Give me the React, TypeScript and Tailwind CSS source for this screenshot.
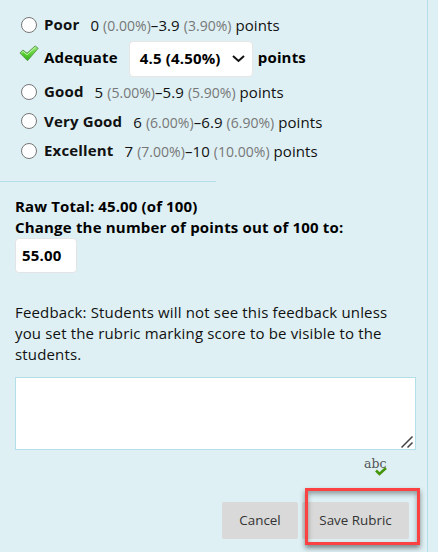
type Level = {
  name: string;
  from: string;
  fromPct: string;
  to: string;
  toPct: string;
  height: string;
};

function Option({ level }: { level: Level }) {
  return (
    <label className={`flex items-center whitespace-nowrap pl-[21px] ${level.height}`}>
      <span className="mr-[7px] size-[16px] shrink-0 rounded-full border border-[#767676] bg-white" />
      <span className="mr-[11px] font-bold tracking-[0.16px]">{level.name}</span>
      <span className="relative top-px tracking-[0.08px]">
        {level.from} <span className="text-sm tracking-[0.03px] text-[#777]">{level.fromPct}</span>–{level.to}{" "}
        <span className="text-sm tracking-[0.03px] text-[#777]">{level.toPct}</span> points
      </span>
    </label>
  );
}

const poor: Level = { name: "Poor", from: "0", fromPct: "(0.00%)", to: "3.9", toPct: "(3.90%)", height: "h-[29px]" };
const others: Level[] = [
  { name: "Good", from: "5", fromPct: "(5.00%)", to: "5.9", toPct: "(5.90%)", height: "h-[29px]" },
  { name: "Very Good", from: "6", fromPct: "(6.00%)", to: "6.9", toPct: "(6.90%)", height: "h-[30px]" },
  { name: "Excellent", from: "7", fromPct: "(7.00%)", to: "10", toPct: "(10.00%)", height: "h-[29px]" },
];

function GreenTick() {
  return (
    <svg width="20" height="17" viewBox="0 0 20 17" className="relative -left-px -top-[4px] mr-[4px] shrink-0">
      <defs>
        <linearGradient id="tick" x1="0" y1="0" x2="0" y2="1">
          <stop offset="0" stopColor="#a5ea84" />
          <stop offset="0.5" stopColor="#5fd335" />
          <stop offset="1" stopColor="#2fae18" />
        </linearGradient>
      </defs>
      <path d="M.9 8 3.9 5 8 8.2 16.2.9 19.2 3.3 8.5 15.7Z" fill="url(#tick)" stroke="#5c9c56" strokeWidth="1" strokeLinejoin="round" />
      <path d="M2.4 7.9 4.1 6.4 8.1 9.8 16.3 2.2" fill="none" stroke="#c9f5b4" strokeWidth="0.9" />
    </svg>
  );
}

export default function App() {
  return (
    <div className="flex h-[552px] w-[438px] overflow-hidden bg-[#def0f4] font-['Open_Sans',sans-serif] text-[15px] leading-[21px] text-[#111]">
      <main className="flex w-[428px] flex-col border-r border-[#b5dfe8]">
        <section className="pt-[10px]">
          <Option level={poor} />
          <div className="flex h-[38px] items-center pb-px pl-[20px] font-bold tracking-[0.16px] text-black">
            <GreenTick />
            <span className="mr-[11px]">Adequate</span>
            <button className="relative top-px mr-[5px] flex h-[36px] w-[124px] items-center justify-between rounded-[4px] border border-[#e8e5e5] bg-white pl-[10px] pr-[7px] font-bold">
              4.5 (4.50%)
              <svg width="13" height="8" viewBox="0 0 13 8" fill="none" stroke="#111" strokeWidth="2">
                <path d="m1 1 5.5 5L12 1" />
              </svg>
            </button>
            <span>points</span>
          </div>
          {others.map((level) => (
            <Option key={level.name} level={level} />
          ))}
        </section>

        <hr className="mt-[16px] w-[216px] border-[#b5dfe8]" />

        <section className="px-[15px] pt-[14px] font-bold text-black">
          <p className="tracking-[0.12px]">Raw Total: 45.00 (of 100)</p>
          <p className="tracking-[0.19px]">Change the number of points out of 100 to:</p>
          <input
            defaultValue="55.00"
            className="block h-[35px] w-[62px] rounded-[4px] border border-[#e2e4e6] bg-white px-[6px] pb-[2px] font-bold tracking-[0.16px]"
          />
        </section>

        <section className="pl-[15px] pt-[29px]">
          <p className="whitespace-nowrap tracking-[0.155px]">
            Feedback: Students will not see this feedback unless
            <br />
            you set the rubric marking score to be visible to the
            <br />
            students.
          </p>
          <div className="mt-[12px] flex h-[73px] w-[401px] items-end justify-end border border-[#b5dfe8] bg-white pb-[1px] pr-[1px]">
            <svg width="13" height="12" viewBox="0 0 13 12" fill="none" stroke="#444" strokeWidth="1.5">
              <path d="M.5 11.5 11.5.5M6.5 11.5l5-5" />
            </svg>
          </div>
        </section>

        <div className="mt-[4px] flex h-[25px] justify-end pr-[40px]">
          <div className="relative w-[23px] font-['DejaVu_Serif',serif] text-[12.5px] leading-[20px] text-[#555]">
            abc
            <svg width="12" height="9" viewBox="0 0 12 9" fill="none" stroke="#46960c" strokeWidth="2.6" className="absolute left-[11px] top-[13px]">
              <path d="m1 3.5 3.5 3.5L11 1" />
            </svg>
          </div>
        </div>

        <footer className="mt-[23px] flex justify-end gap-[4px] pr-[18px] text-[13.4px] text-[#333]">
          <button className="h-[37px] w-[76px] rounded-[2px] bg-[#d9d9d9]">Cancel</button>
          <div className="relative">
            <button className="h-[37px] w-[107px] rounded-[2px] bg-[#d9d9d9]">Save Rubric</button>
            <div className="absolute -top-[14px] left-[3px] h-[57px] w-[115px] border-[3px] border-[#fb4242] shadow-[0_3px_5px_rgba(0,0,0,.45),inset_0_3px_5px_rgba(0,0,0,.35)]" />
          </div>
        </footer>
      </main>
    </div>
  );
}
